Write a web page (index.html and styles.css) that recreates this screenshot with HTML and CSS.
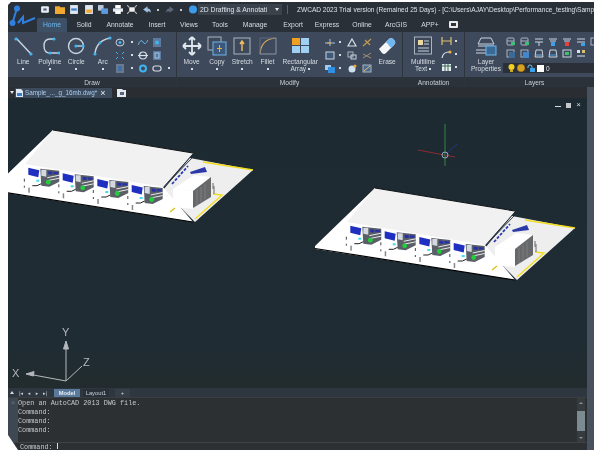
FILE: index.html
```html
<!DOCTYPE html>
<html lang="en">
<head>
    <meta charset="UTF-8">
    <title>ZWCAD 2023</title>
    <link rel="stylesheet" href="styles.css">
</head>
<body>
    <svg class="defs" width="0" height="0">
        <defs>
            <g id="bus">
                <polygon points="-3,-2 13,1 13,20 -3,19" fill="#fff"/>
                <polygon points="0,0 11,2.500 10,9.500 0,7" fill="#1f2fc0"/>
                <polygon points="12,1 31,3 31,14 21,19 13,18" fill="#5a5e66"/>
                <polygon points="13,2 18,2 18,9 13,8" fill="#d4d8e0"/>
                <polygon points="20,3.500 24,4 24,7 20,6.500" fill="#2630a8"/>
                <polygon points="25,4 30,4.500 30,6.500 25,6.500" fill="#2630a8"/>
                <path d="M19 10 L31 7.500 M19 13 L31 10.500" stroke="#e8e8e8" stroke-width="1"/>
                <circle cx="20" cy="14.500" r="2.400" fill="#1ecf3a"/>
                <rect x="8" y="12" width="3" height="2" fill="#3ee0e8"/>
                <path d="M4 18 Q9 19 13 16" stroke="#222" stroke-width="1" fill="none"/>
                <rect x="-4.500" y="11" width="1.200" height="3" fill="#666"/>
                <rect x="-4.500" y="18" width="1.200" height="2" fill="#666"/>
                <rect x="0" y="20" width="1.500" height="5" fill="#888"/>
            </g>
            <g id="depot">
                <polygon points="190,158 253,170 195,222 163,190" fill="#eeeeee"/>
                <polygon points="-7,188 53,130 193,153 163,187 193,222 -7,191" fill="#ffffff"/>
                <polygon points="53,130 193,153 163,187 25,164" fill="#f1f1f1"/>
                <path d="M-7 190.500 L193 222" stroke="#000" stroke-width="1.200"/>
                <path d="M53 130 L193 153" stroke="#0c0f12" stroke-width="1.200"/>
                <path d="M203 162 L253 170" stroke="#f2dc1e" stroke-width="1.600"/>
                <path d="M195 219 L222 195 L213 194" stroke="#f2dc1e" stroke-width="1.400" fill="none"/>
                <path d="M170 212 L175 208" stroke="#d8c020" stroke-width="1.400"/>
                <use href="#bus" x="28.300" y="167.700"/>
                <use href="#bus" x="62.700" y="173.300"/>
                <use href="#bus" x="97.300" y="179"/>
                <use href="#bus" x="131.700" y="185"/>
                <path d="M192 158 L165 186" stroke="#3a4050" stroke-width="1"/>
                <path d="M172 184 L188 166" stroke="#2c3cb0" stroke-width="1.800" stroke-dasharray="3 1.500"/>
                <path d="M190 172 L205 167 L207 172 L191 174 Z" fill="#2b3aa8"/>
                <polygon points="173,189 193,191 211,177 194,175" fill="#fff"/>
                <polygon points="173,189 193,191 193,209 173,207" fill="#fff"/>
                <polygon points="193,191 211,177 211,197 193,208" fill="#66686a"/>
                <path d="M197 190v15M201 187v15M205 184v15" stroke="#8a8c8e" stroke-width=".6"/>
                <path d="M213 183 v6 M214 186 v8" stroke="#666" stroke-width="1"/>
            </g>
        </defs>
    </svg>

    <div class="app">
        <div class="title-row">
            <svg class="logo" width="27" height="22" viewBox="0 0 27 22">
                <path d="M8 3 L3.500 18 M9 18 L14 12 L14 18 L26 13" fill="none" stroke="#2f7fe0" stroke-width="2"/>
                <circle cx="8" cy="3.500" r="3" fill="#2f7fe0"/>
                <circle cx="3.500" cy="18" r="3" fill="#2f7fe0"/>
            </svg>
            <div class="quick">
                <svg viewBox="0 0 9 8"><rect x="1" y="1" width="7" height="6" rx="1" fill="#e8eef4"/><rect x="3" y="3" width="3" height="2" fill="#55657a"/></svg>
                <svg viewBox="0 0 9 8"><path d="M0 1h4l1 1h4v6H0z" fill="#f0a830"/></svg>
                <svg viewBox="0 0 9 8"><rect x="1" width="7" height="8" fill="#dfe8f2"/><rect x="2" y="3" width="5" height="2" fill="#3a7fc8"/></svg>
                <svg viewBox="0 0 9 8"><rect x="1" width="7" height="8" fill="#dfe8f2"/><rect x="2" y="4" width="5" height="3" fill="#f0a830"/></svg>
                <svg viewBox="0 0 9 8"><rect width="5" height="5" fill="#b8c8dc"/><rect x="3" y="3" width="6" height="5" fill="#5b9ade"/></svg>
                <svg viewBox="0 0 9 8"><rect x="2" width="5" height="3" fill="#fff"/><rect y="3" width="9" height="3" fill="#dfe8f2"/><rect x="2" y="5" width="5" height="3" fill="#fff"/></svg>
                <svg viewBox="0 0 9 8"><rect x="2" y="2" width="5" height="4" fill="#eee"/><path d="M0 0l2 2M9 0L7 2M0 8l2-2M9 8L7 6" stroke="#bbb"/></svg>
                <svg viewBox="0 0 9 8"><path d="M1 4l4-3v2q3 0 3 4q-2-2-3-1v1z" fill="#9fc0e0"/></svg>
                <span class="dot"></span>
                <svg viewBox="0 0 9 8"><path d="M8 4L4 1v2Q1 3 1 7q2-2 3-1v1z" fill="#5b6878"/></svg>
                <span class="dot"></span>
                <svg viewBox="0 0 9 9"><circle cx="4.500" cy="4.500" r="4" fill="#3c9be8"/></svg>
            </div>
            <div class="workspace">2D Drafting &amp; Annotati<span class="caret"></span></div>
            <div class="sep"></div>
            <div class="app-title">ZWCAD 2023 Trial version (Remained 25 Days) - [C:\Users\AJAY\Desktop\Performance_testing\Samp</div>
        </div>

        <div class="tab-row">
            <span class="tab active">Home</span>
            <span class="tab w-solid">Solid</span>
            <span class="tab w-anno">Annotate</span>
            <span class="tab w-insert">Insert</span>
            <span class="tab w-views">Views</span>
            <span class="tab w-tools">Tools</span>
            <span class="tab w-manage">Manage</span>
            <span class="tab w-export">Export</span>
            <span class="tab w-express">Express</span>
            <span class="tab w-online">Online</span>
            <span class="tab w-arc">ArcGIS</span>
            <span class="tab w-app">APP+</span>
            <svg class="tab-icon" width="9" height="7"><rect width="9" height="7" rx="1" fill="#e8eaee"/><rect x="2" y="2" width="5" height="3" fill="#333"/></svg>
        </div>

        <div class="ribbon">
            <section class="panel draw">
                <div class="tools">
                    <div class="tool">
                        <svg width="20" height="20"><path d="M3 2L18 18" stroke="#c8d4e0" stroke-width="1.400"/><circle cx="3" cy="3" r="1.600" fill="#3fb4f0"/><circle cx="18" cy="18" r="1.600" fill="#3fb4f0"/></svg>
                        <span>Line</span><i></i>
                    </div>
                    <div class="tool">
                        <svg width="20" height="20"><path d="M14 3H10Q4 3 4 10Q4 17 10 17H20" fill="none" stroke="#c8d4e0" stroke-width="1.400"/><circle cx="14" cy="3" r="1.600" fill="#3fb4f0"/><circle cx="10" cy="17" r="1.600" fill="#3fb4f0"/><circle cx="19" cy="17" r="1.600" fill="#3fb4f0"/></svg>
                        <span>Polyline</span><i></i>
                    </div>
                    <div class="tool">
                        <svg width="20" height="20"><circle cx="10" cy="10" r="7.500" fill="none" stroke="#c8d4e0" stroke-width="1.400"/><path d="M10 10H18" stroke="#c8d4e0" stroke-width="1.400"/><circle cx="10" cy="10" r="1.600" fill="#3fb4f0"/><circle cx="17" cy="10" r="1.600" fill="#3fb4f0"/></svg>
                        <span>Circle</span><i></i>
                    </div>
                    <div class="tool">
                        <svg width="20" height="20"><path d="M2 18Q3 5 17 2" fill="none" stroke="#c8d4e0" stroke-width="1.400"/><circle cx="2" cy="18" r="1.600" fill="#3fb4f0"/><circle cx="17" cy="2" r="1.600" fill="#3fb4f0"/><circle cx="7" cy="7" r="1.400" fill="#3fb4f0"/></svg>
                        <span>Arc</span><i></i>
                    </div>
                </div>
                <div class="smalls draw-smalls">
                    <svg width="10" height="9"><ellipse cx="5" cy="4.500" rx="4" ry="3.500" fill="none" stroke="#c8d4e0"/><circle cx="5" cy="4.500" r="1.500" fill="#3fb4f0"/></svg><i></i>
                    <svg width="10" height="9"><path d="M0 7Q3 0 5 4T10 2" fill="none" stroke="#6fb4e8"/></svg>
                    <svg width="10" height="9"><rect x="1" width="8" height="9" fill="#5d7a9c"/><circle cx="5" cy="4.500" r="2" fill="#3fb4f0"/></svg><span></span>
                    <svg width="10" height="9"><path d="M1 1L3 3M9 1L7 3M1 8L3 6M9 8L7 6" stroke="#3fb4f0"/></svg><i></i>
                    <svg width="10" height="9"><circle cx="5" cy="4.500" r="3.500" fill="none" stroke="#d8e0e8" stroke-width="1.200"/><path d="M0 4.500H10" stroke="#d8e0e8" stroke-width="1.200"/></svg>
                    <svg width="10" height="9"><rect x="1" width="8" height="9" fill="#5d7a9c"/><rect x="3" y="2" width="4" height="5" fill="none" stroke="#9cc8ec"/></svg><span></span>
                    <svg width="10" height="9"><rect x="1" width="8" height="9" fill="#6a7a8c"/><rect x="3" y="2" width="4" height="5" fill="#3f6fa8"/></svg><i></i>
                    <svg width="10" height="9"><circle cx="5" cy="4.500" r="3" fill="none" stroke="#3fb4f0" stroke-width="2"/></svg>
                    <svg width="10" height="9"><rect x="1" y="2" width="8" height="5" rx="2" fill="none" stroke="#d8e0e8" stroke-width="1.200"/></svg><i></i>
                </div>
                <h6>Draw</h6>
            </section>

            <section class="panel modify">
                <div class="tools">
                    <div class="tool">
                        <svg width="20" height="20"><path d="M10 1V19M1 10H19M10 1L7 4M10 1L13 4M10 19L7 16M10 19L13 16M1 10L4 7M1 10L4 13M19 10L16 7M19 10L16 13" fill="none" stroke="#dfe6ee" stroke-width="1.800"/></svg>
                        <span>Move</span><i></i>
                    </div>
                    <div class="tool">
                        <svg width="20" height="20"><rect x="1" y="1" width="13" height="13" fill="none" stroke="#aab4c0"/><rect x="6" y="6" width="13" height="13" fill="#3d5878" stroke="#6fb4e8"/><path d="M12.500 9v7M10 12.500h5" stroke="#f0b040"/></svg>
                        <span>Copy</span><i></i>
                    </div>
                    <div class="tool">
                        <svg width="20" height="20"><rect x="2" y="2" width="16" height="16" fill="none" stroke="#aab4c0"/><path d="M10 15V6M8 8L10 5L12 8" fill="none" stroke="#f0c060" stroke-width="1.400"/></svg>
                        <span>Stretch</span><i></i>
                    </div>
                    <div class="tool">
                        <svg width="20" height="20"><path d="M2 18Q3 3 18 2" fill="none" stroke="#e0b060" stroke-width="1.200"/><path d="M2 18V2H18" fill="none" stroke="#5d6a7c"/><path d="M18 2V18H2" fill="none" stroke="#8a96a6"/></svg>
                        <span>Fillet</span><i></i>
                    </div>
                    <div class="tool wide">
                        <svg width="20" height="20"><rect x="2" y="2" width="8" height="7" fill="#f0a020"/><rect x="11" y="2" width="8" height="7" fill="#9fd0f4"/><rect x="2" y="10" width="8" height="7" fill="#9fd0f4"/><rect x="11" y="10" width="8" height="7" fill="#9fd0f4"/></svg>
                        <span>Rectangular<br>Array <b></b></span>
                    </div>
                </div>
                <div class="smalls modify-smalls">
                    <svg width="10" height="9"><path d="M0 5H10M5 1V8" stroke="#9fc0e0"/><path d="M2 5H6" stroke="#f0a830"/></svg><i></i>
                    <svg width="10" height="9"><path d="M5 1L9 8H1Z" fill="none" stroke="#d8e0e8" stroke-width="1.200"/></svg>
                    <svg width="10" height="9"><path d="M1 8L9 1M3 2L8 7" stroke="#c09a50" stroke-width="1.200"/></svg>
                    <svg width="10" height="9"><rect x="1" y="1" width="8" height="7" fill="#3f5a78" stroke="#c8d4e0"/></svg><i></i>
                    <svg width="10" height="9"><rect x="1" y="1" width="5" height="5" fill="none" stroke="#aab4c0"/><rect x="4" y="4" width="5" height="4" fill="none" stroke="#c8d4e0"/></svg>
                    <svg width="10" height="9"><path d="M1 7L9 2M1 3L9 7" stroke="#a09070"/></svg>
                    <svg width="10" height="9"><rect y="1" width="6" height="5" fill="#a8c8e8"/><rect x="3" y="3" width="7" height="6" fill="#2f8fe0"/></svg><i></i>
                    <svg width="10" height="9"><circle cx="5" cy="5" r="3.500" fill="#cfe0f0"/><circle cx="8" cy="2" r="1.500" fill="#f0a830"/></svg>
                    <svg width="10" height="9"><rect x="1" y="1" width="8" height="7" fill="#4a6a90" stroke="#aab4c0"/><path d="M2 7L8 2" stroke="#f0c060"/></svg>
                </div>
                <div class="tool erase">
                    <svg width="20" height="20"><path d="M2 13L12 3Q14 1 16 3L18 5Q19 7 17 9L9 17Q7 19 5 17Z" fill="#f4f6f8"/><path d="M9 6L12 3Q14 1 16 3L18 5Q19 7 17 9L14 12Z" fill="#6fb8f0"/></svg>
                    <span>Erase</span>
                </div>
                <h6>Modify</h6>
            </section>

            <section class="panel annotation">
                <div class="tool wide multi">
                    <svg width="20" height="20"><rect x="1.500" y="1" width="17" height="17" fill="#3d4656" stroke="#aab4c0"/><rect x="5" y="4" width="5" height="5" fill="#e8d8a0"/><path d="M11 5h5M11 8h5M5 12h11M5 15h11" stroke="#c8d4e0"/></svg>
                    <span>Multiline<br>Text <b></b></span>
                </div>
                <div class="anno-col">
                    <div><svg width="11" height="8"><path d="M1 0V8M10 0V8M1 4H10" stroke="#e0c070" stroke-width="1.200"/></svg><i></i></div>
                    <div><svg width="11" height="8"><path d="M1 8Q2 2 8 2" fill="none" stroke="#dfe6ee" stroke-width="1.200"/><circle cx="9" cy="2" r="1.500" fill="#f0b040"/></svg><i></i></div>
                    <div><svg width="11" height="8"><rect x="1" y="1" width="9" height="7" fill="#e8eef4"/><path d="M1 3H10M4 1V8M7 1V8" stroke="#3a6a50"/></svg><i></i></div>
                </div>
                <h6>Annotation</h6>
            </section>

            <section class="panel layers">
                <div class="tool wide props">
                    <svg width="24" height="20"><path d="M4 8L7 2H17L20 8ZM4 10H20M2 14H14M2 17H14" fill="none" stroke="#c8d4e0"/><rect x="12" y="10" width="10" height="9" fill="#3a6a98" stroke="#6fb4e8"/></svg>
                    <span>Layer<br>Properties</span>
                </div>
                <div class="layer-side">
                    <div class="layer-icons">
                        <svg width="10" height="9"><rect x="1" y="1" width="7" height="7" rx="1" fill="none" stroke="#a8b4c4"/><path d="M1 4H8" stroke="#a8b4c4"/><rect x="5" y="5" width="4" height="3" fill="#3fc070"/></svg>
                        <svg width="10" height="9"><rect x="1" y="1" width="7" height="7" rx="1" fill="none" stroke="#a8b4c4"/><path d="M1 4H8" stroke="#a8b4c4"/><rect x="5" y="5" width="4" height="3" fill="#3fc070"/></svg>
                        <svg width="10" height="9"><path d="M1 2H9M1 5H9M5 5V9" stroke="#c8d4e0" fill="none"/></svg>
                        <svg width="10" height="9"><path d="M1 2H9M2 4H8" stroke="#c8d4e0"/><rect x="3" y="5" width="4" height="4" fill="#3fa0e8"/></svg>
                        <svg width="10" height="9"><path d="M1 2H9M2 4H8" stroke="#c8d4e0"/><rect x="3" y="5" width="4" height="4" fill="#e83f3f"/></svg>
                        <svg width="10" height="9"><path d="M1 2H9M1 5H9" stroke="#c8d4e0"/><rect x="5" y="6" width="4" height="3" fill="#3fa0e8"/></svg>
                        <svg width="10" height="9"><rect x="1" y="1" width="8" height="7" fill="none" stroke="#a8b4c4"/></svg>
                        <svg width="10" height="9"><rect x="1" y="1" width="7" height="7" fill="none" stroke="#a8b4c4"/><rect x="3" y="3" width="6" height="6" fill="#3a6a98"/></svg>
                        <svg width="10" height="9"><rect x="1" y="1" width="7" height="7" fill="none" stroke="#a8b4c4"/><rect x="3" y="3" width="6" height="6" fill="#3f88d0"/></svg>
                        <svg width="10" height="9"><path d="M2 1H8L9 8H1Z" fill="none" stroke="#c8d4e0"/><path d="M2 6H8" stroke="#6fb4e8"/></svg>
                        <svg width="10" height="9"><path d="M2 1H8L9 8H1Z" fill="none" stroke="#c8d4e0"/><path d="M2 6H8" stroke="#3fa0e8"/></svg>
                        <svg width="10" height="9"><rect x="1" y="1" width="8" height="7" fill="none" stroke="#c8d4e0"/><rect x="3" y="3" width="4" height="3" fill="#3fc070"/></svg>
                        <svg width="10" height="9"><rect x="1" y="1" width="3" height="3" fill="#d8e0e8"/><rect x="6" y="1" width="3" height="3" fill="#d8c070"/><rect x="1" y="6" width="8" height="2" fill="#8a96a6"/></svg>
                    </div>
                    <div class="layer-select">
                        <svg width="7" height="8"><circle cx="3.500" cy="3" r="3" fill="#f4d020"/><rect x="2" y="6" width="3" height="2" fill="#c8a820"/></svg>
                        <svg width="8" height="8"><circle cx="4" cy="4" r="3.800" fill="#d8a020" stroke="#a87010" stroke-dasharray="1 1"/></svg>
                        <svg width="8" height="8"><path d="M1 4V3Q1 1 3 1T5 3V4" fill="none" stroke="#6fc0f0"/><rect x="3" y="4" width="5" height="4" fill="#3fa0e8"/></svg>
                        <span class="swatch"></span>
                        <span>0</span>
                    </div>
                </div>
                <h6>Layers</h6>
            </section>
        </div>

        <div class="doc-row">
            <span class="doc-arrow"></span>
            <div class="doc-tab">
                <svg width="7" height="8"><path d="M0 0H5L7 2V8H0Z" fill="#dfe8f2"/><rect x="1" y="4" width="5" height="3" fill="#3a7fc8"/></svg>
                <span>Sample_..._g_16mb.dwg*</span>
                <b>&times;</b>
            </div>
            <svg class="doc-new" width="9" height="8"><path d="M0 0H5L6 1H9V8H0Z" fill="#e4eaf0"/><rect x="3" y="3" width="4" height="3" fill="#55657a"/></svg>
        </div>

        <div class="work">
            <div class="viewport">
                <svg class="scene" width="580" height="290" viewBox="8 98 580 290">
                    <use href="#depot"/>
                    <use href="#depot" x="322" y="58"/>
                    <path d="M418 150L455 157" stroke="#8c2a30" stroke-width="1"/>
                    <path d="M445 124V166" stroke="#2f8a3a" stroke-width="1"/>
                    <path d="M445 155L457 144" stroke="#203880" stroke-width="1"/>
                    <circle cx="445" cy="155" r="3" fill="none" stroke="#9aa6c0" stroke-width="1"/>
                    <g class="ucs" fill="none" stroke="#b4b8bc">
                        <path d="M66 381V343M66 381L28 374M66 381L82 366"/>
                        <path d="M63.500 349L66 341L68.500 349ZM34 371.500L26 374L33.500 376Z" fill="#b4b8bc"/>
                    </g>
                    <text x="62" y="336" class="axis">Y</text>
                    <text x="12" y="377" class="axis">X</text>
                    <text x="83" y="366" class="axis">Z</text>
                </svg>
                <div class="win-btns">
                    <span class="min"></span>
                    <span class="restore"></span>
                    <span class="close">&times;</span>
                </div>
            </div>

            <div class="layout-bar">
                <span class="nav up"></span>
                <span class="nav-txt">|&#9666;</span>
                <span class="nav-txt">&#9666;</span>
                <span class="nav-txt">&#9656;</span>
                <span class="nav-txt">&#9656;|</span>
                <span class="sheet model">Model</span>
                <span class="sheet">Layout1</span>
                <span class="sheet plus">+</span>
            </div>

            <div class="console">
                <div class="console-grip">&times;</div>
                <pre class="history">Open an AutoCAD 2013 DWG file.
Command:
Command:
Command:</pre>
                <div class="scroll">
                    <span class="arrow-up"></span>
                    <span class="thumb"></span>
                    <span class="arrow-down"></span>
                </div>
            </div>
            <div class="prompt">Command: <span class="cursor"></span></div>
        </div>
    </div>
</body>
</html>
```

FILE: styles.css
```css
* {
    margin: 0;
    padding: 0;
    box-sizing: border-box;
}

html, body {
    height: 100%;
    overflow: hidden;
}

body {
    background: #fff;
    font-family: "Liberation Sans", Arial, sans-serif;
    color: #dfe4ea;
    padding: 2px 6px 0 8px;
}

.defs {
    display: block;
    height: 0;
}

.app {
    height: 448px;
    background: #2a3038;
    display: flex;
    flex-direction: column;
    overflow: hidden;
    filter: blur(0.5px);
    clip-path: polygon(3px 0, 100% 0, 100% 100%, 10px 100%, 0 433px, 0 3px);
}

/* title bar */
.title-row {
    height: 15px;
    display: flex;
    align-items: center;
    position: relative;
    padding-left: 32px;
    flex: none;
}

.logo {
    position: absolute;
    left: 1px;
    top: 3px;
    z-index: 2;
}

.quick {
    display: flex;
    align-items: center;
    gap: 4.500px;
    width: 158px;
    flex: none;
}

.quick svg {
    width: 10px;
    height: 9px;
    flex: none;
}

.quick .dot {
    width: 2px;
    height: 2px;
    margin: 0 1px;
    background: #c0c8d0;
}

.workspace {
    width: 84px;
    height: 11px;
    background: #3a424c;
    font-size: 6.8px;
    line-height: 11px;
    padding-left: 2px;
    white-space: nowrap;
    position: relative;
    flex: none;
}

.caret {
    position: absolute;
    right: 3px;
    top: 4px;
    border: 2.5px solid transparent;
    border-top: 3px solid #e4e8ec;
    border-bottom: 0;
}

.sep {
    width: 1px;
    height: 9px;
    background: #59616c;
    margin: 0 9px 0 5px;
    flex: none;
}

.app-title {
    font-size: 6.55px;
    white-space: nowrap;
    color: #dce1e6;
}

/* ribbon tabs */
.tab-row {
    height: 15px;
    display: flex;
    align-items: center;
    padding-left: 29px;
    font-size: 6.8px;
    flex: none;
}

.tab {
    text-align: center;
    height: 14px;
    line-height: 14px;
    color: #d6dce2;
    flex: none;
}

.tab.active {
    width: 30px;
    background: #3d5066;
    color: #6fb6ee;
    border-radius: 2px 2px 0 0;
}

.w-solid { width: 34px; }
.w-anno { width: 38px; }
.w-insert { width: 36px; }
.w-views { width: 28px; }
.w-tools { width: 34px; }
.w-manage { width: 36px; }
.w-export { width: 40px; }
.w-express { width: 28px; }
.w-online { width: 42px; }
.w-arc { width: 26px; }
.w-app { width: 42px; }

.tab-icon {
    margin-left: -2px;
}

/* ribbon */
.ribbon {
    height: 55px;
    display: flex;
    flex: none;
    background: #2e343c;
    gap: 1px;
}

.panel {
    display: flex;
    position: relative;
    background: linear-gradient(#3e4a5c 0, #3e4a5c 45px, #2c323a 45px);
    padding: 4px 0 0 2px;
    flex: none;
}

.panel h6 {
    position: absolute;
    left: 0;
    right: 0;
    top: 46px;
    font-size: 6.6px;
    font-weight: normal;
    text-align: center;
    color: #c8ced4;
    line-height: 9px;
}

.draw { width: 168px; }
.modify { width: 225px; }
.annotation { width: 61px; }
.layers { flex: 1; }

.tools {
    display: flex;
}

.tool {
    width: 26.500px;
    display: flex;
    flex-direction: column;
    align-items: center;
    font-size: 6.6px;
    line-height: 7.500px;
    text-align: center;
    color: #d6dce2;
    flex: none;
}

.modify .tool {
    width: 25.300px;
}

.tool svg {
    margin-bottom: 1.500px;
    flex: none;
}

.tool i,
.smalls i,
.anno-col i {
    display: block;
    width: 2px;
    height: 2px;
    background: #d6dce2;
}

.tool i {
    margin-top: 3px;
}

.tool b {
    display: inline-block;
    width: 2px;
    height: 2px;
    background: #d6dce2;
    vertical-align: middle;
}

.modify .tool.wide {
    width: 40px;
}

.smalls {
    display: grid;
    align-items: center;
    justify-items: center;
    row-gap: 4px;
    align-self: start;
    padding-top: 1.500px;
}

.draw-smalls {
    grid-template-columns: 10px 14px 8px 20px 4px;
    margin-left: -1px;
}

.modify-smalls {
    grid-template-columns: 12px 8px 16px 14px;
    margin-left: 4px;
}

.modify .erase {
    width: 26px;
}

.tool.multi {
    width: 36px;
}

.anno-col {
    display: flex;
    flex-direction: column;
    gap: 5px;
    padding-top: 1px;
}

.anno-col div {
    display: flex;
    align-items: center;
    gap: 3px;
}

.tool.props {
    width: 38px;
}

.layer-side {
    margin-left: -2px;
    display: flex;
    flex-direction: column;
    gap: 5px;
    padding-top: 1px;
    min-width: 0;
    flex: 1;
}

.layer-icons {
    display: grid;
    grid-template-columns: repeat(7, 14px);
    row-gap: 3px;
    height: 21px;
    padding-left: 3px;
    overflow: hidden;
}

.layer-select {
    height: 10px;
    background: #2b3038;
    display: flex;
    align-items: center;
    gap: 2px;
    font-size: 6.6px;
    padding-left: 5px;
}

.swatch {
    width: 7px;
    height: 7px;
    background: #fff;
}

/* document tabs */
.doc-row {
    height: 11px;
    display: flex;
    align-items: center;
    background: #2a2e33;
    border-right: 7px solid #48525e;
    padding-left: 2px;
    flex: none;
}

.doc-arrow {
    border: 2px solid transparent;
    border-top: 3px solid #dfe4ea;
    border-bottom: 0;
    margin-right: 1px;
}

.doc-tab {
    width: 97px;
    height: 10px;
    background: #3c4a5c;
    display: flex;
    align-items: center;
    gap: 2px;
    padding-left: 1px;
    font-size: 6.3px;
    white-space: nowrap;
    color: #a8cdf0;
}

.doc-tab b {
    font-size: 9px;
    font-weight: normal;
    color: #e8ecf0;
    margin-left: 1px;
}

.doc-new {
    margin-left: 5px;
}

/* drawing area */
.work {
    flex: 1;
    display: flex;
    flex-direction: column;
    min-height: 0;
    border-right: 7px solid #48525e;
    background: #2d3033;
}

.viewport {
    height: 290px;
    background: linear-gradient(#1e2a32, #1f2c33 85%, #222c2e);
    position: relative;
    overflow: hidden;
    flex: none;
}

.scene {
    display: block;
}

.axis {
    font-family: "Liberation Sans", Arial, sans-serif;
    font-size: 11px;
    fill: #b4b8bc;
}

.win-btns {
    position: absolute;
    right: 6px;
    top: 4px;
    display: flex;
    align-items: center;
    gap: 5px;
}

.win-btns .min {
    width: 6px;
    height: 1px;
    background: #d8dce0;
    margin-top: 3px;
}

.win-btns .restore {
    width: 5px;
    height: 5px;
    background: #c4c8cc;
}

.win-btns .close {
    font-size: 8px;
    line-height: 6px;
    color: #d8dce0;
}

.layout-bar {
    height: 9px;
    display: flex;
    align-items: center;
    background: #2e3740;
    font-size: 5.8px;
    color: #c8d0d8;
    padding-left: 2px;
    flex: none;
}

.nav.up {
    border: 2.5px solid transparent;
    border-bottom: 3px solid #d8dce0;
    border-top: 0;
    margin-right: 3px;
}

.nav-txt {
    width: 8px;
    text-align: center;
    font-size: 5px;
    font-family: "DejaVu Sans", sans-serif;
}

.sheet {
    width: 26px;
    height: 8px;
    line-height: 8px;
    text-align: center;
    margin-right: 3px;
    background: #2a3038;
}

.sheet.model {
    background: #5a7a9c;
    font-weight: bold;
    color: #e4ecf4;
    margin-left: 5px;
}

.sheet.plus {
    width: 15px;
    margin-left: 3px;
    background: #363e48;
}

.console {
    height: 45px;
    display: flex;
    background: #2d3033;
    border-top: 1px solid #3a3e42;
    flex: none;
}

.console-grip {
    width: 10px;
    background: #3e4852;
    color: #66707a;
    font-size: 8px;
    line-height: 9px;
    text-align: center;
    flex: none;
}

.history {
    flex: 1;
    font-family: "Liberation Mono", monospace;
    font-size: 6.8px;
    line-height: 9px;
    color: #c4c8cc;
    padding-top: 1px;
}

.scroll {
    width: 8px;
    margin-right: 2px;
    background: #363c3e;
    display: flex;
    flex-direction: column;
    align-items: center;
    justify-content: space-between;
    padding: 4px 0 3px;
}

.arrow-up {
    border: 2px solid transparent;
    border-bottom: 2px solid #8a949c;
    border-top: 0;
}

.arrow-down {
    border: 2px solid transparent;
    border-top: 2px solid #8a949c;
    border-bottom: 0;
}

.thumb {
    width: 8px;
    height: 20px;
    background: #7c8a92;
}

.prompt {
    flex: 1;
    font-family: "Liberation Mono", monospace;
    font-size: 6.8px;
    line-height: 6.500px;
    color: #c4c8cc;
    padding-left: 12px;
    border-top: 1px solid #3e4246;
    white-space: pre;
    overflow: visible;
}

.cursor {
    display: inline-block;
    width: 1px;
    height: 6px;
    background: #d8dce0;
}
```
